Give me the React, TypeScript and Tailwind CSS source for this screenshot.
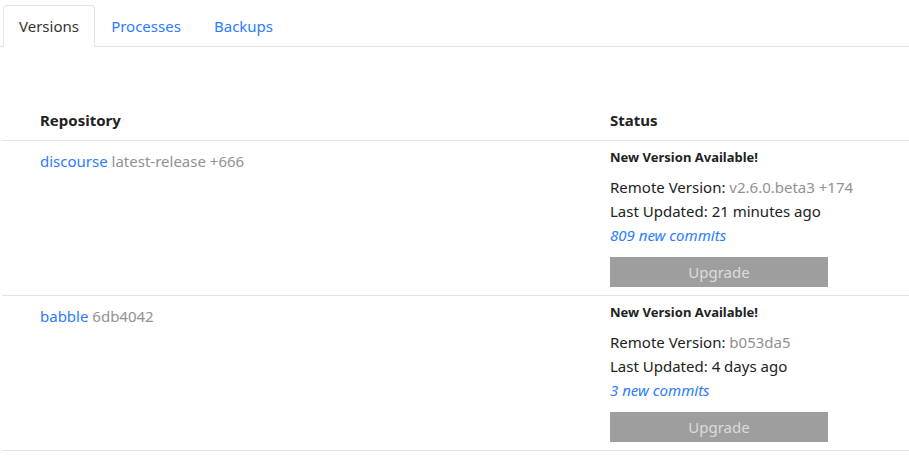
const font = { fontFamily: '"Noto Sans", "Open Sans", sans-serif' };

const rows = [
  {
    name: "discourse",
    version: "latest-release +666",
    remote: "v2.6.0.beta3 +174",
    updated: "21 minutes ago",
    commits: "809 new commits",
  },
  {
    name: "babble",
    version: "6db4042",
    remote: "b053da5",
    updated: "4 days ago",
    commits: "3 new commits",
  },
];

const Tabs = () => (
  <div className="flex border-b border-[#e3e3e3] pl-[3px] pt-[5px]">
    <div className="-mb-px h-[42px] w-[92px] rounded-t border border-b-white border-[#e3e3e3] bg-white flex items-center justify-center pt-px text-[15px] text-[#333]">
      Versions
    </div>
    <div className="h-[41px] w-[102px] flex items-center justify-center pt-px text-[15px] text-[#2b7cff]">
      Processes
    </div>
    <div className="h-[41px] w-[93px] flex items-center justify-center pt-px text-[15px] text-[#2b7cff]">
      Backups
    </div>
  </div>
);

export default function App() {
  return (
    <div className="min-h-[458px] w-[909px] bg-white text-[#222]" style={font}>
      <Tabs />
      <div className="mt-[53px] ml-[2px]">
        <div className="flex h-[41px] items-center border-b border-[#e3e3e3] text-[15px] font-bold text-[#222]">
          <div className="w-[608px] pl-[38px]">Repository</div>
          <div>Status</div>
        </div>
        {rows.map((r) => (
          <div key={r.name} className="flex border-b border-[#e3e3e3] pt-[8px] pb-[8px]">
            <div className="w-[608px] pl-[38px] text-[15px] leading-6">
              <span className="text-[#2b7cff]">{r.name}</span>{" "}
              <span className="text-[#919191]">{r.version}</span>
            </div>
            <div className="flex flex-col">
              <div className="text-[13px] font-bold leading-4 text-[#222]">New Version Available!</div>
              <div className="mt-[10px] text-[15px] leading-6">
                Remote Version: <span className="text-[#919191]">{r.remote}</span>
              </div>
              <div className="text-[15px] leading-6">Last Updated: {r.updated}</div>
              <div className="text-[15px] leading-6 italic text-[#2b7cff]">{r.commits}</div>
              <div className="mt-[10px] flex h-[30px] w-[218px] items-center justify-center bg-[#9e9e9e] text-[15px] text-[#dcdcdc]">
                Upgrade
              </div>
            </div>
          </div>
        ))}
      </div>
    </div>
  );
}
